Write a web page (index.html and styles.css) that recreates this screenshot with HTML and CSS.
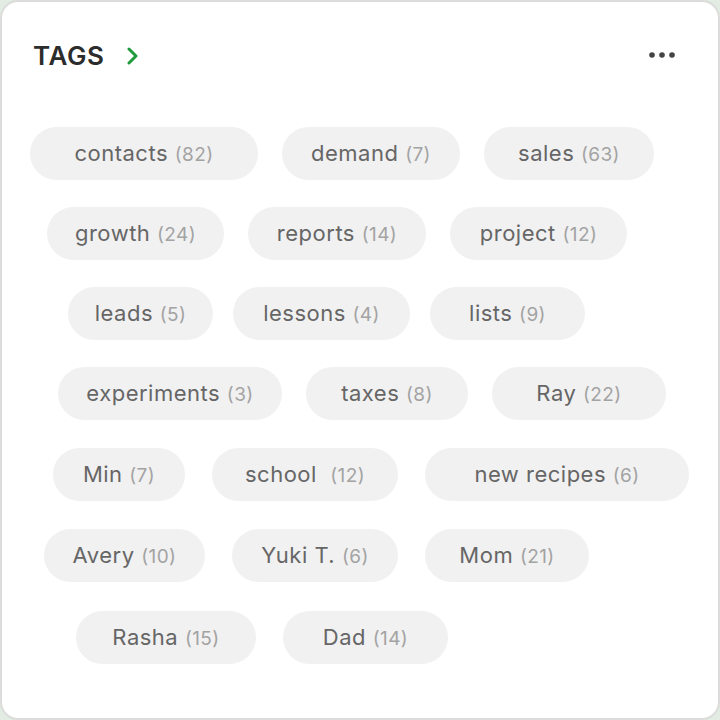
FILE: index.html
```html
<!DOCTYPE html>
<html lang="en">
<head>
<meta charset="utf-8">
<title>Tags</title>
<link rel="stylesheet" href="styles.css">
</head>
<body>
<div class="card">
  <div class="header">
    <div class="title-wrap">
      <span class="title">TAGS</span>
      <svg class="chevron" width="11" height="18" viewBox="0 0 11 18" aria-hidden="true">
        <polyline points="2,2 9,9 2,16" fill="none" stroke="#1f9b3e" stroke-width="3" stroke-linecap="round" stroke-linejoin="round"/>
      </svg>
    </div>
    <svg class="more" width="26" height="6" viewBox="0 0 26 6" aria-hidden="true">
      <circle cx="3" cy="3" r="2.8" fill="#444"/>
      <circle cx="13" cy="3" r="2.8" fill="#444"/>
      <circle cx="23" cy="3" r="2.8" fill="#444"/>
    </svg>
  </div>
  <div class="tags">
    <div class="row row-1">
      <span class="tag w-228">contacts <em>(82)</em></span>
      <span class="tag w-178">demand <em>(7)</em></span>
      <span class="tag w-170">sales <em>(63)</em></span>
    </div>
    <div class="row row-2">
      <span class="tag w-177">growth <em>(24)</em></span>
      <span class="tag w-178">reports <em>(14)</em></span>
      <span class="tag w-177">project <em>(12)</em></span>
    </div>
    <div class="row row-3">
      <span class="tag w-145">leads <em>(5)</em></span>
      <span class="tag w-177">lessons <em>(4)</em></span>
      <span class="tag w-155">lists <em>(9)</em></span>
    </div>
    <div class="row row-4">
      <span class="tag w-224">experiments <em>(3)</em></span>
      <span class="tag w-162">taxes <em>(8)</em></span>
      <span class="tag w-174">Ray <em>(22)</em></span>
    </div>
    <div class="row row-5">
      <span class="tag w-132">Min <em>(7)</em></span>
      <span class="tag w-186">school&nbsp; <em>(12)</em></span>
      <span class="tag w-264">new recipes <em>(6)</em></span>
    </div>
    <div class="row row-6">
      <span class="tag w-161">Avery <em>(10)</em></span>
      <span class="tag w-166">Yuki T. <em>(6)</em></span>
      <span class="tag w-164">Mom <em>(21)</em></span>
    </div>
    <div class="row row-7">
      <span class="tag w-180">Rasha <em>(15)</em></span>
      <span class="tag w-165">Dad <em>(14)</em></span>
    </div>
  </div>
</div>
</body>
</html>
```

FILE: styles.css
```css
html, body {
  margin: 0;
  padding: 0;
}

body {
  width: 720px;
  height: 720px;
  background: #e3ece3;
  font-family: Inter, "Liberation Sans", sans-serif;
}

.card {
  box-sizing: border-box;
  width: 720px;
  height: 720px;
  border: 2px solid #dcdcdc;
  border-radius: 18px;
  background: #ffffff;
  overflow: hidden;
}

.header {
  height: 44px;
  padding: 32px 43px 0 31px;
  display: flex;
  align-items: center;
  justify-content: space-between;
}

.title-wrap {
  display: flex;
  align-items: center;
  gap: 22px;
}

.title {
  font-size: 26px;
  font-weight: 600;
  color: #2c2c2c;
  letter-spacing: 0.6px;
  line-height: 1;
}

.chevron {
  display: block;
  margin-top: -1px;
}

.more {
  display: block;
  margin-top: -2px;
}

.tags {
  margin-top: 49px;
  display: flex;
  flex-direction: column;
  gap: 27px;
}

.row {
  display: flex;
  align-items: center;
}

.row-1 { padding-left: 28px; gap: 24px; }
.row-2 { padding-left: 45px; gap: 24px; }
.row-3 { padding-left: 66px; gap: 20px; }
.row-4 { padding-left: 56px; gap: 24px; }
.row-5 { padding-left: 51px; gap: 27px; margin-top: 1px; }
.row-6 { padding-left: 42px; gap: 27px; margin-top: 1px; }
.row-7 { padding-left: 74px; gap: 27px; margin-top: 2px; }

.tag {
  box-sizing: border-box;
  display: block;
  height: 53px;
  line-height: 53px;
  border-radius: 27px;
  background: #f1f1f1;
  text-align: center;
  font-size: 22px;
  letter-spacing: 0.5px;
  color: #666666;
  white-space: pre;
}

.tag em {
  font-style: normal;
  font-size: 19px;
  letter-spacing: 0.4px;
  color: #a3a3a3;
}

.w-132 { width: 132px; }
.w-145 { width: 145px; }
.w-155 { width: 155px; }
.w-161 { width: 161px; }
.w-162 { width: 162px; }
.w-164 { width: 164px; }
.w-165 { width: 165px; }
.w-166 { width: 166px; }
.w-170 { width: 170px; }
.w-174 { width: 174px; }
.w-177 { width: 177px; }
.w-178 { width: 178px; }
.w-180 { width: 180px; }
.w-186 { width: 186px; }
.w-224 { width: 224px; }
.w-228 { width: 228px; }
.w-264 { width: 264px; }
```
